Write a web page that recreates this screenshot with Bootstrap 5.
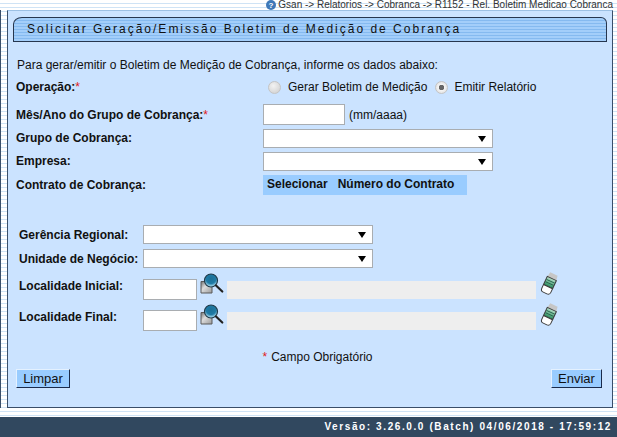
<!DOCTYPE html>
<html lang="pt">
<head>
<meta charset="utf-8">
<title>Gsan</title>
<link href="https://cdn.jsdelivr.net/npm/bootstrap@5.3.0/dist/css/bootstrap.min.css" rel="stylesheet">
<style>
html,body{height:437px;overflow:hidden}
body{font-family:"Liberation Sans",Arial,sans-serif;font-size:12px;color:#111;margin:0;
 background:repeating-linear-gradient(180deg,#fff 0 3px,#cfe3f5 3px 4px)}
.crumb{height:10px;font-size:10px;line-height:10px;color:#333;padding-right:4px;gap:2px;white-space:nowrap}
.crumb svg{width:10px;height:10px;flex:none}
.mid{height:398px;border-left:1px solid #3a4e68}
.sheet{width:606px;height:398px;margin-left:6px;background:#cbe3ff;border:1px solid #3a4e68;border-top-color:#9cc0e4;padding:6px 0 0 5px}
.tab{height:25px;width:594px;background:repeating-linear-gradient(180deg,#a3cefa 0 2px,#85baf0 2px 3px);border:1px solid #26364f;border-top-left-radius:9px 7px;border-top-right-radius:6px;font-size:12px;letter-spacing:2px;line-height:23px;padding-left:13px;white-space:nowrap}
.intro{margin:16px 0 0 4px;line-height:14px}
.frow{display:flex;align-items:center;white-space:nowrap}
.in1{margin-left:3px}.in2{margin-left:6px}
.r-op{margin-top:7px;height:16px}
.r-mes{margin-top:9px;height:21px}
.r-sel{margin-top:4px;height:19px}
.r-con{margin-top:4px;height:20px}
.r-ger{margin-top:30px;height:19px}
.r-uni{margin-top:5px;height:19px}
.r-loc1{margin-top:11px;height:21px}
.r-loc2{margin-top:10px;height:21px}
.lab{font-weight:700;flex:none;width:247px}
.lab-op{width:252px}
.lab-b{width:124px}
.lab-s{margin-bottom:2px}
.lab-u{margin-bottom:8px}
.req{color:#e02020;font-weight:400}
.form-control.fld{background:#fff;border:1px solid #a9adb1;border-radius:0;height:21px;min-height:0;padding:0 2px;flex:none;box-shadow:none}
.fld-mes{width:82px!important}
.fld-loc{width:54px!important}
.form-select.pick{width:230px;height:19px;min-height:0;padding:0;border:1px solid #a9adb1;border-radius:0;flex:none;
 background-color:#fff;background-size:8px 6px;background-position:right 6px center;
 background-image:url("data:image/svg+xml,%3Csvg xmlns='http://www.w3.org/2000/svg' viewBox='0 0 8 6'%3E%3Cpath d='M0 0h8L4 6z' fill='%23000'/%3E%3C/svg%3E")}
.form-check-input.rad{width:13px;height:13px;margin:0;flex:none;border:1px solid #c4c4c4;background:radial-gradient(circle at 40% 35%,#f2f2f2,#cdcdcd);box-shadow:none}
.form-check-input.rad:checked{background:radial-gradient(circle,#666 0 2.5px,#f4f4f4 3px,#d6d6d6 100%);border-color:#c4c4c4}
.form-check-input.rad.t2{margin-left:8px}
.t1{margin-left:7px}.t3{margin-left:6px}
.hint{margin-left:4px}
.sel{width:204px;height:20px;background:#99ccff;font-weight:700;line-height:19px;padding-left:4px}
.ro{background:#eee;height:18px;width:309px;flex:none;margin-left:4px}
.ico-m{width:23px;height:22px;flex:none;margin:0 0 11px 3px;overflow:visible}
.ico-e{width:18px;height:22px;flex:none;margin:0 0 11px 4px;overflow:visible}
.rq{margin-top:19px;height:14px;line-height:14px;padding-left:10px}
.rq .req{margin-right:4px}
.acts{margin:5px 0 0 3px;width:586px}
.btn.act{background:#99ccff;border:1px solid;border-color:#e4f1ff #1a2a4a #1a2a4a #e4f1ff;font-size:13px;line-height:17px;height:19px;padding:0;border-radius:0;color:#111}
.b-l{width:54px}.b-e{width:51px}
.foot{margin-top:9px;height:20px;background:#31485f;color:#fff;font-weight:700;font-size:10px;letter-spacing:1.6px;line-height:20px;text-align:right;padding-right:5px;white-space:nowrap}
</style>
</head>
<body>
<svg width="0" height="0" class="position-absolute">
<defs>
<linearGradient id="gd" x1="0" y1="0" x2="1" y2="1"><stop offset="0" stop-color="#6e6e6e"/><stop offset=".4" stop-color="#dcdcdc"/><stop offset="1" stop-color="#9a9a9a"/></linearGradient>
<radialGradient id="gl" cx=".5" cy=".35" r=".7"><stop offset="0" stop-color="#1c6f96"/><stop offset=".55" stop-color="#1f7ba6"/><stop offset=".85" stop-color="#a9dcf0"/><stop offset="1" stop-color="#d4eef8"/></radialGradient>
<linearGradient id="ge" x1="0" y1="0" x2="0" y2="1"><stop offset="0" stop-color="#b5dfc8"/><stop offset="1" stop-color="#268a5a"/></linearGradient>
<symbol id="lupa" viewBox="0 0 23 22" overflow="visible">
<path d="M1 8.500h10l1 1V20H1z" fill="url(#gd)" stroke="#5a5a5a" stroke-width="1"/>
<circle cx="11" cy="7.500" r="6.500" fill="url(#gl)" stroke="#1e3a4a" stroke-width="1.200"/>
<path d="M16 12.500l6.300 6" stroke="#222" stroke-width="2.200" stroke-linecap="round"/>
</symbol>
<symbol id="borracha" viewBox="0 0 18 22" overflow="visible">
<g transform="rotate(25 9.500 10.500)">
<path d="M5.500 0h8l1 5h-10z" fill="#c6c6c6"/>
<rect x="4.500" y="5" width="10" height="9" fill="url(#ge)" stroke="#3c3c3c" stroke-width="1"/>
<path d="M5 8h9M5 10.500h9" stroke="#24604a" stroke-width="1"/>
<path d="M4.500 14h10v4a3 3 0 0 1-3 3h-4a3 3 0 0 1-3-3z" fill="#fff" stroke="#3c3c3c" stroke-width="1"/>
</g>
</symbol>
</defs>
</svg>
<div class="crumb d-flex justify-content-end align-items-center">
<svg viewBox="0 0 10 10"><circle cx="5" cy="5" r="5" fill="#3f78b8"/><text x="5" y="8" font-size="8" font-weight="700" fill="#fff" text-anchor="middle" font-family="Liberation Sans">?</text></svg>
<span>Gsan -&gt; Relatorios -&gt; Cobranca -&gt; R1152 - Rel. Boletim Medicao Cobranca</span>
</div>
<div class="mid">
<main class="sheet">
<div class="tab">Solicitar Geração/Emissão Boletim de Medição de Cobrança</div>
<div class="intro">Para gerar/emitir o Boletim de Medição de Cobrança, informe os dados abaixo:</div>
<div class="frow in1 r-op"><span class="lab lab-op">Operação:<span class="req">*</span></span>
<input class="form-check-input rad" type="radio" name="op"><span class="t1">Gerar Boletim de Medição</span><input class="form-check-input rad t2" type="radio" name="op" checked><span class="t3">Emitir Relatório</span></div>
<div class="frow in1 r-mes"><span class="lab">Mês/Ano do Grupo de Cobrança:<span class="req">*</span></span><input class="form-control fld fld-mes" type="text"><span class="hint">(mm/aaaa)</span></div>
<div class="frow in1 r-sel"><span class="lab lab-s">Grupo de Cobrança:</span><select class="form-select pick"><option></option></select></div>
<div class="frow in1 r-sel"><span class="lab lab-s">Empresa:</span><select class="form-select pick"><option></option></select></div>
<div class="frow in1 r-con"><span class="lab">Contrato de Cobrança:</span><span class="sel">Selecionar&nbsp;&nbsp; Número do Contrato</span></div>
<div class="frow in2 r-ger"><span class="lab lab-b">Gerência Regional:</span><select class="form-select pick"><option></option></select></div>
<div class="frow in2 r-uni"><span class="lab lab-b">Unidade de Negócio:</span><select class="form-select pick"><option></option></select></div>
<div class="frow in2 r-loc1"><span class="lab lab-b lab-u">Localidade Inicial:</span><input class="form-control fld fld-loc" type="text"><svg class="ico-m"><use href="#lupa"/></svg><span class="ro"></span><svg class="ico-e"><use href="#borracha"/></svg></div>
<div class="frow in2 r-loc2"><span class="lab lab-b lab-u">Localidade Final:</span><input class="form-control fld fld-loc" type="text"><svg class="ico-m"><use href="#lupa"/></svg><span class="ro"></span><svg class="ico-e"><use href="#borracha"/></svg></div>
<div class="rq text-center"><span class="req">*</span>Campo Obrigatório</div>
<div class="acts d-flex justify-content-between"><button type="button" class="btn act b-l">Limpar</button><button type="button" class="btn act b-e">Enviar</button></div>
</main>
</div>
<footer class="foot">Versão: 3.26.0.0 (Batch) 04/06/2018 - 17:59:12</footer>
</body>
</html>
